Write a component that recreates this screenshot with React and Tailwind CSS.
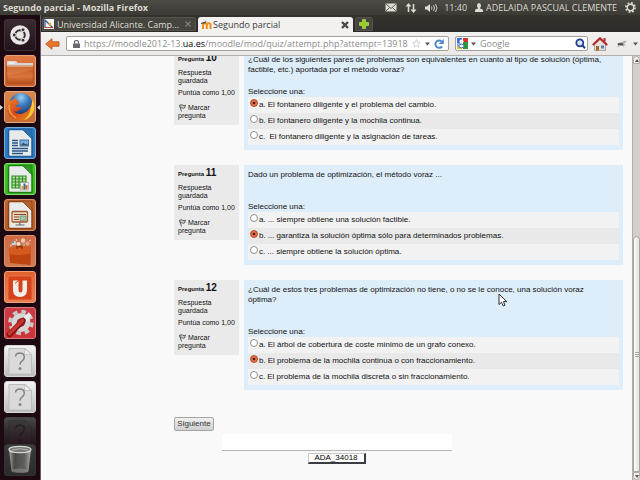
import React from "react";

const questions = [
  {
    number: 10,
    text: "¿Cuál de los siguientes pares de problemas son equivalentes en cuanto al tipo de solución (óptima, factible, etc.) aportada por el método voraz?",
    gap: "mt-3",
    selected: 0,
    answers: [
      ["a.", "El fontanero diligente y el problema del cambio."],
      ["b.", "El fontanero diligente y la mochila continua."],
      ["c.", "\u00a0El fontanero diligente y la asignación de tareas."],
    ],
  },
  {
    number: 11,
    text: "Dado un problema de optimización, el método voraz ...",
    gap: "mt-[22px]",
    selected: 1,
    answers: [
      ["a.", "... siempre obtiene una solución factible."],
      ["b.", "... garantiza la solución óptima sólo para determinados problemas."],
      ["c.", "... siempre obtiene la solución óptima."],
    ],
  },
  {
    number: 12,
    text: "¿Cuál de estos tres problemas de optimización no tiene, o no se le conoce, una solución voraz óptima?",
    gap: "mt-[22px]",
    selected: 1,
    answers: [
      ["a.", "El árbol de cobertura de coste mínimo de un grafo conexo."],
      ["b.", "El problema de la mochila continua o con fraccionamiento."],
      ["c.", "El problema de la mochila discreta o sin fraccionamiento."],
    ],
  },
];

function Caret({ className }) {
  return (
    <svg className={className} width="5" height="4" viewBox="0 0 5 4" aria-hidden="true">
      <path d="M0 0.5h5L2.5 3.5z" fill="#55534f" />
    </svg>
  );
}

function UbuntuIcon() {
  return (
    <svg viewBox="0 0 32 32" className="size-8 shrink-0">
      <circle cx="16" cy="16" r="9.8" fill="#e9e7e6" />
      <circle cx="16" cy="16" r="4.8" fill="none" stroke="#3a3034" strokeWidth="2" />
      <g fill="#3a3034" stroke="#e9e7e6" strokeWidth="1">
        <circle cx="10.2" cy="16" r="2" />
        <circle cx="19" cy="10.8" r="2" />
        <circle cx="19" cy="21.2" r="2" />
      </g>
    </svg>
  );
}

function FolderIcon() {
  return (
    <svg viewBox="0 0 32 32" className="size-8 shrink-0">
      <defs>
        <linearGradient id="folder" x1="0" y1="0" x2="0" y2="1">
          <stop offset="0" stopColor="#c9581c" />
          <stop offset="0.6" stopColor="#d9753a" />
          <stop offset="1" stopColor="#b9501d" />
        </linearGradient>
      </defs>
      <path d="M3 7q0-1 1-1h8l2 2h15v5H3z" fill="#d8d4cf" />
      <path d="M4.500 8h6" stroke="#fff" />
      <path d="M2.500 11h27l-.6 16q-.1 1.500-1.500 1.500H4.600q-1.400 0-1.500-1.500z" fill="url(#folder)" stroke="#a5471a" strokeWidth="0.6" />
      <path d="M3 11.500h26" stroke="#efa97d" strokeWidth="0.8" />
      <path d="M3 20q12-1 26-6v-2H3z" fill="#fff" opacity="0.1" />
    </svg>
  );
}

function FirefoxIcon() {
  return (
    <svg viewBox="0 0 32 32" className="size-8 shrink-0">
      <defs>
        <radialGradient id="globe" cx="0.5" cy="0.2" r="0.8">
          <stop offset="0" stopColor="#9dd0ee" />
          <stop offset="0.4" stopColor="#3f7fc0" />
          <stop offset="1" stopColor="#152b66" />
        </radialGradient>
        <linearGradient id="fox" x1="0" y1="0" x2="1" y2="1">
          <stop offset="0" stopColor="#ee8a35" />
          <stop offset="0.5" stopColor="#d4471a" />
          <stop offset="1" stopColor="#ee9a22" />
        </linearGradient>
      </defs>
      <circle cx="17" cy="13.500" r="11.500" fill="url(#globe)" />
      <path d="M28.500 8q3.500 7 .5 13.500-4 8-13 8-9.500 0-12.500-8Q1 14 5 7l1 3q1.500-1.500 3.500-1.500L11.500 6q0 3 3.500 5l-.5 2-3 1.500q.5 2 3.500 1.500 2 0 3 1.500-2 .5-3.500 2-2 1.500-4.500.5 2.500 3.500 7.500 3Q27 21 28.500 8z" fill="url(#fox)" />
      <path d="M28.500 8q3.500 7 .5 13.500-3 6-9 7.500 6-5 6.500-11 1.500-4 2-10z" fill="#f6cb35" />
      <path d="M5 14q-.5 9 7 13" fill="none" stroke="#f09a3c" strokeWidth="1.500" />
    </svg>
  );
}

function OfficeIcon({ kind }) {
  const frame = { writer: "#1d5f9e", calc: "#1f7d16", impress: "#8d4218" }[kind];
  const fold = { writer: "#2a6fae", calc: "#2f9a22", impress: "#b2602b" }[kind];
  return (
    <svg viewBox="0 0 32 32" className="size-8 shrink-0">
      <path d="M6 2.500h14l8 8v19H6q-1.500 0-1.500-1.500V4q0-1.500 1.500-1.500z" fill="#e9eaea" stroke={frame} strokeWidth="1.500" />
      <path d="M18 2h10v10z" fill={fold} stroke={frame} strokeWidth="0.8" />
      {kind === "writer" && (
        <g stroke="#27588c" strokeWidth="1.300">
          <path d="M8 13.500h6M8 16h6M8 18.500h6M8 21.500h16M8 24h16M8 26.500h11" />
          <rect x="16" y="13" width="8.500" height="6" fill="#7db2dc" strokeWidth="0.8" />
          <path d="M16.500 18.500l3-3 2 2 1-1 2 2z" fill="#33506b" stroke="none" />
        </g>
      )}
      {kind === "calc" && (
        <g>
          <rect x="8" y="13" width="14" height="12" fill="#b8dfa9" />
          <path d="M8 13h14v12H8zM8 16h14M8 19h14M8 22h14M11.500 13v12M15 13v12M18.500 13v12" fill="none" stroke="#2d8f20" strokeWidth="1.200" />
          <rect x="16.500" y="19.500" width="8" height="7.500" fill="#f4f2ea" stroke="#9a9a90" strokeWidth="0.600" />
          <rect x="17.500" y="23" width="2" height="3.500" fill="#e9a21f" />
          <rect x="19.500" y="20.500" width="2" height="6" fill="#2a6db4" />
          <rect x="21.500" y="22" width="2" height="4.500" fill="#d2691e" />
        </g>
      )}
      {kind === "impress" && (
        <g>
          <rect x="8" y="12.500" width="15.500" height="10.500" rx="1" fill="#ead9cb" stroke="#a4562a" strokeWidth="1.300" />
          <path d="M10 15.500h12M10 18h5M10 20.500h5" stroke="#8a4420" strokeWidth="1.200" />
          <rect x="16" y="17" width="6" height="4.500" fill="#9fc7a5" stroke="#57805c" strokeWidth="0.600" />
          <path d="M15.800 23v2.500M11.500 26h9" stroke="#666" strokeWidth="1.100" />
        </g>
      )}
    </svg>
  );
}

function SoftwareCenterIcon() {
  return (
    <svg viewBox="0 0 32 32" className="size-8 shrink-0">
      <g opacity="0.9">
        <circle cx="10" cy="8" r="2.300" fill="#c9d7df" />
        <circle cx="19" cy="5.500" r="2.200" fill="#f0d6bf" />
        <circle cx="23.500" cy="8.500" r="2" fill="#e8a79a" />
        <circle cx="14.500" cy="9" r="2" fill="#f4efe6" />
        <circle cx="9" cy="7" r="1" fill="#4d7da5" />
        <circle cx="20" cy="9.500" r="1.300" fill="#9cc27a" />
        <path d="M6 11l3-2M25 6l2-1M12 4l1 2" stroke="#f6e0cd" />
      </g>
      <path d="M5 13l22-1.500L26.500 30 6 28z" fill="#bd4310" />
      <path d="M5 13l22-1.500-.2 7Q15 21 5.300 19z" fill="#d65a20" />
      <path d="M13 14v-2.500h5V14" fill="none" stroke="#8d2f08" strokeWidth="1.300" />
    </svg>
  );
}

function UbuntuOneIcon() {
  return (
    <svg viewBox="0 0 32 32" className="size-8 shrink-0">
      <rect x="4" y="5" width="24" height="24" rx="1.500" fill="#d8421a" stroke="#ec8257" strokeWidth="0.800" />
      <path d="M9 9.500h5.500v9.500q0 2.500 2 2.500t2-2.500V9.500H23V19q0 7-7 7t-7-7z" fill="#f1eeea" />
      <path d="M11 12.500l3.500-3" stroke="#d8421a" />
    </svg>
  );
}

function SettingsIcon() {
  return (
    <svg viewBox="0 0 32 32" className="size-8 shrink-0">
      <circle cx="17" cy="15.500" r="9.500" fill="#d7d7d5" />
      <circle cx="17" cy="15.500" r="11" fill="none" stroke="#c9c9c7" strokeWidth="3.500" strokeDasharray="4.640 4" />
      <circle cx="17" cy="15.500" r="4.200" fill="#9f3a3d" />
      <path d="M20 10l5-5 2 4-3 5-5 1z" fill="#ecebea" />
      <path d="M5.500 27.500L19 13.500" stroke="#7d1416" strokeWidth="5.500" strokeLinecap="round" />
      <path d="M5.500 26.800L18.500 13.500" stroke="#c93632" strokeWidth="3.400" strokeLinecap="round" />
    </svg>
  );
}

function UnknownIcon() {
  return (
    <svg viewBox="0 0 32 32" className="size-8 shrink-0">
      <path d="M5 3.500h16.500l6 6V29H5z" fill="#dadada" stroke="#bcbcbc" />
      <path d="M20.500 3.500v6h7z" fill="#eeeeee" stroke="#bcbcbc" strokeWidth="0.800" />
      <path d="M11.500 11.500q.5-3.500 4.500-3.500 4.300.2 4.300 4 0 2.500-2.400 4.200-1.900 1.300-1.900 3.600" fill="none" stroke="#858585" strokeWidth="1.500" />
      <circle cx="16" cy="23.500" r="1.500" fill="#858585" />
    </svg>
  );
}

function TrashIcon() {
  return (
    <svg viewBox="0 0 32 32" className="size-8 shrink-0">
      <defs>
        <linearGradient id="bin" x1="0" y1="0" x2="1" y2="0">
          <stop offset="0" stopColor="#a5a5a3" />
          <stop offset="0.250" stopColor="#4a4a49" />
          <stop offset="0.700" stopColor="#5e5e5d" />
          <stop offset="1" stopColor="#a8a8a6" />
        </linearGradient>
      </defs>
      <path d="M5 6l2.500 21q.3 2 8.500 2t8.500-2L27 6z" fill="url(#bin)" />
      <ellipse cx="16" cy="26.500" rx="7.500" ry="2" fill="#8c8c8a" opacity="0.600" />
      <ellipse cx="16" cy="5.500" rx="11" ry="3.200" fill="#777775" stroke="#d8d8d5" strokeWidth="1.300" />
      <path d="M8 6q8-2.500 16 0" fill="none" stroke="#b8b8b5" />
    </svg>
  );
}

const apps = [
  { name: "Archivos", tile: "bg-linear-to-b from-[#e07a45] to-[#c8602c] border-[#e9a27c]", icon: <FolderIcon /> },
  { name: "Firefox", tile: "bg-linear-to-b from-[#d9874f] to-[#c46a35] border-[#e3a77e]", icon: <FirefoxIcon />, running: true },
  { name: "Writer", tile: "bg-linear-to-b from-[#2f7fc4] to-[#2a78bd] border-[#74aede]", icon: <OfficeIcon kind="writer" /> },
  { name: "Calc", tile: "bg-linear-to-b from-[#3fc427] to-[#38ba20] border-[#85e070]", icon: <OfficeIcon kind="calc" /> },
  { name: "Impress", tile: "bg-linear-to-b from-[#c0652c] to-[#b65e28] border-[#d9936a]", icon: <OfficeIcon kind="impress" /> },
  { name: "Centro de software", tile: "bg-linear-to-b from-[#cf6a44] to-[#d07a52] border-[#dd9272]", icon: <SoftwareCenterIcon /> },
  { name: "Ubuntu One", tile: "bg-linear-to-b from-[#e0622f] to-[#e87f50] border-[#f0a07c]", icon: <UbuntuOneIcon /> },
  { name: "Configuración", tile: "bg-linear-to-b from-[#c93a46] to-[#cf3436] border-[#dc7a80]", icon: <SettingsIcon /> },
];

function Tile({ name, tile, icon, running }) {
  return (
    <div className="relative flex justify-center">
      {running && (
        <>
          <svg className="absolute top-3.5 left-0" width="3" height="5" viewBox="0 0 3 5"><path d="M0 0l3 2.500L0 5z" fill="#dedbdc" /></svg>
          <svg className="absolute top-3.5 right-0" width="3" height="5" viewBox="0 0 3 5"><path d="M3 0L0 2.500 3 5z" fill="#dedbdc" /></svg>
        </>
      )}
      <button type="button" aria-label={name} className={`flex size-8 items-center justify-center overflow-hidden rounded-[3px] border ${tile}`}>
        {icon}
      </button>
    </div>
  );
}

function Launcher() {
  const unknown = "bg-linear-to-b from-[#f2f2f2] to-[#bdbdbd] border-[#d8d8d8]";
  return (
    <nav aria-label="Lanzador" className="flex w-[41px] shrink-0 flex-col overflow-hidden border-r border-[#6d5a66] bg-[#1d0912] pt-1 pb-1">
      <div className="flex flex-col gap-1">
        <Tile name="Inicio" tile="bg-linear-to-b from-[#3a2b32] to-[#22131a] border-[#3f3037]" icon={<UbuntuIcon />} />
        {apps.map((app) => (
          <Tile key={app.name} {...app} />
        ))}
      </div>
      <div className="mt-1.5 flex min-h-0 flex-1 flex-col gap-1 overflow-hidden">
        <Tile name="Aplicación desconocida" tile={unknown} icon={<UnknownIcon />} />
        <Tile name="Aplicación desconocida" tile={unknown} icon={<UnknownIcon />} />
        <div className="mask-linear-to-b brightness-[0.3] [mask-image:linear-gradient(#000,#0003_90%)]">
          <Tile name="Aplicación desconocida" tile={unknown} icon={<UnknownIcon />} />
        </div>
      </div>
      <Tile name="Papelera" tile="bg-linear-to-b from-[#3b3b3b] to-[#2b2b2b] border-[#333333]" icon={<TrashIcon />} />
    </nav>
  );
}

function TopPanel() {
  return (
    <header className="flex h-[15px] shrink-0 items-center justify-between bg-linear-to-b from-[#4d4b45] to-[#3b3a35] pr-1 pl-[3px] text-[9px] leading-none text-[#dfdbd2]">
      <h1 className="font-bold whitespace-nowrap">Segundo parcial - Mozilla Firefox</h1>
      <div className="flex items-center">
        <svg width="12" height="9" viewBox="0 0 12 9" aria-label="Correo">
          <rect x="0.500" y="0.500" width="11" height="8" fill="#dfdbd2" />
          <path d="M0.500 0.500L6 5.500l5.500-5M0.500 8.500l4-4M11.500 8.500l-4-4" fill="none" stroke="#504e48" strokeWidth="0.900" />
        </svg>
        <svg className="ml-2" width="12" height="10" viewBox="0 0 12 10" aria-label="Red">
          <path d="M3.500 9V2M8.500 1v7" stroke="#dfdbd2" strokeWidth="1.600" />
          <path d="M.5 3.500L3.500 0l3 3.500zM5.500 6.500l3 3.500 3-3.500z" fill="#dfdbd2" />
        </svg>
        <svg className="ml-2" width="13" height="10" viewBox="0 0 13 10" aria-label="Volumen">
          <path d="M0 3.500h2L5 1v8L2 6.500H0z" fill="#dfdbd2" />
          <path d="M6.500 3.500q1 1.500 0 3M8.500 2q2 3 0 6M10.500 1q3 4 0 8" fill="none" stroke="#dfdbd2" strokeWidth="0.900" />
        </svg>
        <time className="ml-1.5">11:40</time>
        <svg className="ml-2" width="8" height="9" viewBox="0 0 8 9" aria-hidden="true">
          <path d="M4 0q2 0 2 2.500Q6 4 5 5v.5q3 .5 3 1.500v2H0V7q0-1 3-1.500V5Q2 4 2 2.500 2 0 4 0z" fill="#dfdbd2" />
        </svg>
        <span className="ml-[3px] whitespace-nowrap">ADELAIDA PASCUAL CLEMENTE</span>
        <svg className="ml-2" width="11" height="11" viewBox="0 0 10 10" aria-label="Sistema">
          <circle cx="5" cy="5" r="3" fill="none" stroke="#dfdbd2" strokeWidth="1.300" />
          <circle cx="5" cy="5" r="4.200" fill="none" stroke="#dfdbd2" strokeWidth="1.500" strokeDasharray="1.600 1.700" />
        </svg>
      </div>
    </header>
  );
}

function TabBar() {
  return (
    <div role="tablist" className="flex h-[17px] shrink-0 items-end gap-0.5 bg-linear-to-b from-[#33322d] to-[#2c2b27] pt-0.5 pl-px text-[9px] leading-none">
      <button type="button" role="tab" className="flex h-3.5 w-[154px] items-center self-start rounded-t-[3px] border border-[#55534c] bg-[#45443e] pr-1 pl-px text-[#dfdbd2]">
        <svg width="10" height="10" viewBox="0 0 10 10" className="shrink-0" aria-hidden="true">
          <rect width="10" height="10" fill="#f4f4f2" />
          <path d="M1 9V1l8 8" fill="none" stroke="#2d4b9b" strokeWidth="1.200" />
          <path d="M4 5l3-2v4z" fill="#e4b62b" />
          <path d="M1 8.500h8" stroke="#c8452c" />
        </svg>
        <span className="ml-[3px] flex-1 text-left whitespace-nowrap">Universidad Alicante. Camp…</span>
        <svg width="6" height="6" viewBox="0 0 6 6" aria-hidden="true"><path d="M.5.5l5 5M5.500.5l-5 5" stroke="#807e77" strokeWidth="1.200" /></svg>
      </button>
      <button type="button" role="tab" aria-selected="true" className="flex h-[15px] w-[155px] items-center rounded-t-[3px] bg-[#f2f1f0] pr-1 pl-[3px] text-[#3c3c3c]">
        <svg width="11" height="8" viewBox="0 0 11 8" className="shrink-0" aria-hidden="true">
          <path d="M2 8V4.500q0-2.200 1.900-2.200t1.900 2.200V8M5.800 4.500q0-2.200 1.900-2.200t1.900 2.200V8" fill="none" stroke="#f08c1a" strokeWidth="2" />
          <path d="M0 2L5.500 0 4.500 2.200 0 3z" fill="#4a4a48" />
        </svg>
        <span className="ml-px flex-1 text-left whitespace-nowrap">Segundo parcial</span>
        <svg width="8" height="8" viewBox="0 0 8 8" aria-hidden="true"><path d="M1 1l6 6M7 1L1 7" stroke="#4a4945" strokeWidth="2.400" /></svg>
      </button>
      <button type="button" aria-label="Nueva pestaña" className="flex h-3.5 w-[18px] items-center justify-center self-start rounded-t-[3px] border border-[#55534c] bg-[#45443e]">
        <svg width="10" height="10" viewBox="0 0 10 10"><path d="M3.500.5h3v3h3v3h-3v3h-3v-3h-3v-3h3z" fill="#8fd01e" stroke="#c9ee7e" strokeWidth="0.600" /></svg>
      </button>
    </div>
  );
}

function Toolbar() {
  return (
    <div className="flex h-6 shrink-0 items-center border-b border-[#b4b0ab] bg-linear-to-b from-[#f2f1f0] to-[#ebe9e7] pr-0.5 pl-1 text-[9px] leading-none">
      <button type="button" aria-label="Atrás">
        <svg width="15" height="12" viewBox="0 0 15 12"><path d="M.7 6L7 .7v3.100h7v4.400H7v3.100z" fill="#e8772e" stroke="#b9501a" strokeWidth="0.800" strokeLinejoin="round" /></svg>
      </button>
      <div className="ml-1.5 flex h-[15px] min-w-0 flex-1 items-center rounded-[2px] border border-[#a39f9a] bg-white px-1">
        <svg className="ml-0.5 shrink-0" width="7" height="8" viewBox="0 0 7 8" aria-hidden="true">
          <rect y="3.500" width="7" height="4.500" rx="0.600" fill="#6b6b6b" />
          <path d="M1.500 4V2.500q0-2 2-2t2 2V4" fill="none" stroke="#6b6b6b" strokeWidth="1.200" />
        </svg>
        <div role="textbox" aria-label="Dirección" contentEditable suppressContentEditableWarning className="ml-1 min-w-0 flex-1 overflow-hidden py-px whitespace-nowrap text-[#8a8a8a] outline-none">
          https://moodle2012-13.<span className="text-black">ua.es</span>/moodle/mod/quiz/attempt.php?attempt=13918
        </div>
        <svg className="shrink-0" width="9" height="9" viewBox="0 0 10 10" aria-hidden="true"><path d="M5 .7l1.300 2.900 3.100.3L7 6l.7 3.100L5 7.500 2.300 9.100 3 6 .6 3.900l3.100-.3z" fill="#fff" stroke="#b9b9b9" strokeWidth="0.700" /></svg>
        <Caret className="ml-1 shrink-0" />
        <button type="button" aria-label="Recargar" className="ml-1">
          <svg width="10" height="10" viewBox="0 0 10 10"><path d="M8 7.500A3.700 3.700 0 1 1 7.500 2.300" fill="none" stroke="#4f87c7" strokeWidth="2" /><path d="M9.800 0v5H4.800z" fill="#4f87c7" /></svg>
        </button>
      </div>
      <div className="ml-1.5 flex h-[15px] w-[133px] shrink-0 items-center rounded-[2px] border border-[#a39f9a] bg-white px-px">
        <svg className="shrink-0" width="11" height="11" viewBox="0 0 11 11" aria-hidden="true">
          <path d="M0 0h5v5H0z" fill="#3c6fd4" />
          <path d="M6 0h5v4H6z" fill="#d8342a" />
          <path d="M6 4h5v7H6z" fill="#2a9a3a" />
          <path d="M0 5h5v4H0z" fill="#8fb4ee" />
          <path d="M0 8.500h5V11H0z" fill="#efc02d" />
          <circle cx="4.500" cy="3.500" r="2" fill="#fff" />
          <ellipse cx="4.500" cy="8" rx="2.600" ry="1.800" fill="#fff" stroke="#2b57b8" strokeWidth="0.800" />
        </svg>
        <Caret className="ml-[3px] shrink-0" />
        <input aria-label="Buscar" placeholder="Google" className="ml-1 min-w-0 flex-1 bg-transparent outline-none placeholder:text-[#8a8a8a]" />
        <button type="button" aria-label="Buscar en Google">
          <svg width="11" height="11" viewBox="0 0 11 11"><circle cx="4.800" cy="4.800" r="3.500" fill="#dbe6f5" stroke="#1f3f8f" strokeWidth="1.800" /><path d="M7.300 7.300l2.700 2.900" stroke="#1f3f8f" strokeWidth="2" /></svg>
        </button>
      </div>
      <button type="button" aria-label="Inicio" className="ml-1">
        <svg width="16" height="14" viewBox="0 0 16 14">
          <path d="M2.500 7.500L8 2.500l5.500 5V13.500h-11z" fill="#e5e1dc" stroke="#8b8680" strokeWidth="0.700" />
          <path d="M.8 8L8 1.300 15.200 8" fill="none" stroke="#b52a2a" strokeWidth="2.200" />
          <rect x="11.500" y="1" width="2" height="3.500" fill="#b52a2a" />
          <rect x="4" y="9" width="3" height="4.500" fill="#a5642f" /><rect x="9" y="8.500" width="3" height="3" fill="#5b7fae" />
        </svg>
      </button>
      <svg className="ml-2 shrink-0" width="11" height="8" viewBox="0 0 11 8" aria-hidden="true">
        <path d="M1 3.500L9.500.5 10.500 1.500 8 4l2 1-4 1z" fill="#b5b4b1" /><ellipse cx="4.500" cy="4.200" rx="3" ry="1.300" fill="#55534f" /><path d="M3 5L2 7M6.500 5l1 1.500" stroke="#807e79" strokeWidth="0.700" />
      </svg>
      <Caret className="ml-1.5 shrink-0" />
    </div>
  );
}

function Question({ number, text, gap, selected, answers }) {
  return (
    <section className="flex items-start gap-[5px]">
      <div className="w-[65px] shrink-0 bg-[#eaeaea] pt-0.5 pb-[5px] pl-1 text-[7px] leading-2">
        <h2 className="text-[6px] leading-3 font-bold whitespace-nowrap">
          Pregunta <span className="text-[10px]">{number}</span>
        </h2>
        <p className="mt-1 w-10">Respuesta guardada</p>
        <p className="mt-1 whitespace-nowrap">Puntúa como 1,00</p>
        <a href={`#marcar-${number}`} className="mt-[7px] block w-12">
          <svg className="float-left mr-0.5 ml-px" width="7" height="8" viewBox="0 0 7 8" aria-hidden="true">
            <path d="M.5 1l2 6.500" stroke="#555" strokeWidth="0.900" />
            <path d="M.7 1.200q1.500-1 3 0t2.800-.2L5.500 4q-1 .7-2 0t-2 .3z" fill="#c9c9c9" stroke="#444" strokeWidth="0.800" />
          </svg>
          Marcar pregunta
        </a>
      </div>
      <fieldset className="min-w-0 flex-1 bg-[#deedfa] pt-[5px] pr-1 pb-[5px] pl-1">
        <p className="pr-2 text-[8px] leading-[10px]">{text}</p>
        <p className={`text-[8px] leading-[10px] ${gap}`}>Seleccione una:</p>
        {answers.map(([letter, answer], i) => (
          <label key={letter} className="flex h-4 gap-px pl-0.5 odd:bg-[#f2f2f2] even:bg-[#e9e9e9]">
            <input
              type="radio"
              name={`pregunta-${number}`}
              defaultChecked={i === selected}
              className="mt-0.5 size-2 shrink-0 appearance-none rounded-full border border-[#8f8f8f] bg-white checked:border-[#a8492a] checked:bg-[radial-gradient(circle,#4a1a0c_20%,#ea6f45_40%)]"
            />
            <span className="flex gap-0.5 text-[8px] leading-4 whitespace-nowrap">
              <span>{letter}</span>
              <span>{answer}</span>
            </span>
          </label>
        ))}
      </fieldset>
    </section>
  );
}

function ScrollBar() {
  return (
    <div aria-hidden="true" className="flex w-2 shrink-0 flex-col border-l border-[#b0aca7] bg-[#d3cfcb]">
      <div className="flex h-2 items-center justify-center rounded-t-full border border-[#b0aca7] bg-[#f4f3f2]">
        <svg width="4" height="3" viewBox="0 0 4 3"><path d="M0 3l2-3 2 3z" fill="#55534f" /></svg>
      </div>
      <div className="grow-[175]" />
      <div className="flex grow-[233] flex-col items-center justify-center gap-px rounded-t-full border border-[#a8a49f] bg-linear-to-r from-[#fbfbfa] to-[#e4e2df]">
        <i className="h-px w-1 bg-[#a8a49f]" />
        <i className="h-px w-1 bg-[#a8a49f]" />
        <i className="h-px w-1 bg-[#a8a49f]" />
      </div>
      <div className="flex h-2 items-center justify-center rounded-b-full border border-[#b0aca7] bg-[#f4f3f2]">
        <svg width="4" height="3" viewBox="0 0 4 3"><path d="M0 0l2 3 2-3z" fill="#55534f" /></svg>
      </div>
    </div>
  );
}

export default function App() {
  return (
    <div className="relative flex h-screen flex-col overflow-hidden bg-[#1d0912] font-['Open_Sans','Noto_Sans',sans-serif]">
      <TopPanel />
      <div className="flex min-h-0 flex-1">
        <Launcher />
        <div className="flex min-w-0 flex-1 flex-col">
          <TabBar />
          <Toolbar />
          <div className="flex min-h-0 flex-1 bg-[#f9f9f9]">
            <main className="min-w-0 flex-1 overflow-hidden font-['Liberation_Sans',Arial,sans-serif] text-[#111111]">
              <form className="-mt-1.5 flex flex-col gap-[15px] pr-[9px] pl-[133px]">
                {questions.map((q) => (
                  <Question key={q.number} {...q} />
                ))}
                <button type="button" className="mt-3 h-3.5 w-10 rounded-[2px] border border-[#a5a5a5] bg-linear-to-b from-[#f0f0f0] to-[#cfcfcf] text-[8px] leading-none text-[#333333]">
                  Siguiente
                </button>
              </form>
              <footer className="mt-[3px] flex flex-col items-center gap-0.5">
                <div className="h-[17px] w-[230px] border-b border-[#b5b5b5] bg-white" />
                <button type="button" className="h-[11px] w-[58px] border border-r-2 border-b-2 border-[#c8c8c8] border-r-[#3c3c44] border-b-[#3c3c44] bg-white text-[8px] leading-none text-black">
                  ADA_34018
                </button>
              </footer>
            </main>
            <ScrollBar />
          </div>
        </div>
      </div>
      <svg className="pointer-events-none absolute top-[293px] left-[498px]" width="10" height="14" viewBox="0 0 10 14" aria-hidden="true">
        <path d="M1 1v10.500l2.500-2.200L5.200 13l1.800-.8L5.400 8.600h3.400z" fill="#fff" stroke="#2a2a2a" strokeWidth="1" />
      </svg>
    </div>
  );
}
